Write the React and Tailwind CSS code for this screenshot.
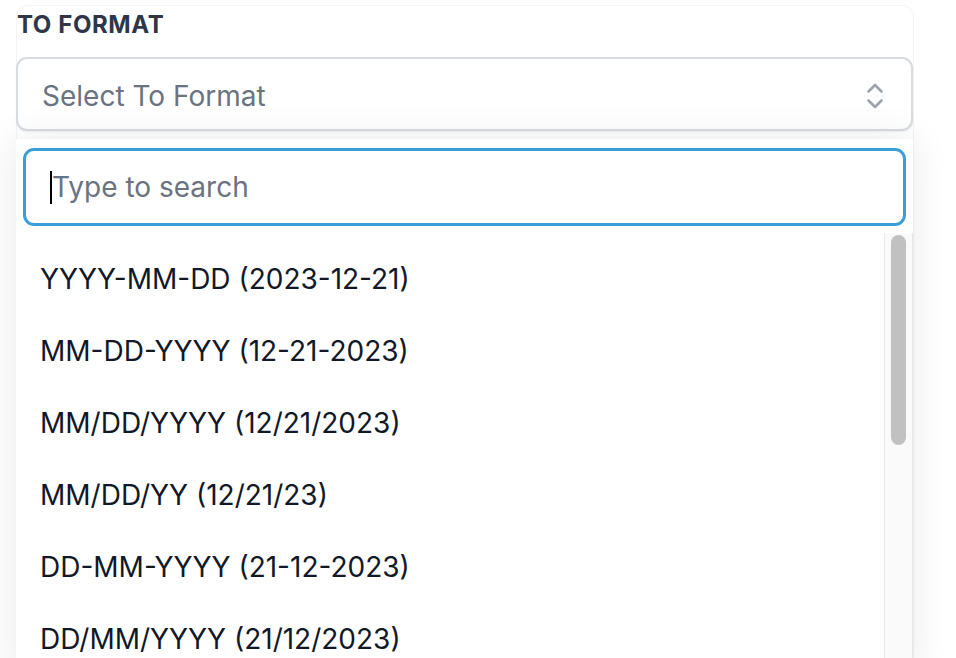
const FORMATS = [
  'YYYY-MM-DD (2023-12-21)',
  'MM-DD-YYYY (12-21-2023)',
  'MM/DD/YYYY (12/21/2023)',
  'MM/DD/YY (12/21/23)',
  'DD-MM-YYYY (21-12-2023)',
  'DD/MM/YYYY (21/12/2023)',
];

function UpDown() {
  return (
    <svg width="18" height="28" viewBox="0 0 18 28" fill="none" stroke="#9ca3af" strokeWidth="2.6" strokeLinecap="round" strokeLinejoin="round">
      <path d="M2.5 9.5 L9 3 L15.5 9.5" />
      <path d="M2.5 18.5 L9 25 L15.5 18.5" />
    </svg>
  );
}

export default function App() {
  return (
    <div
      className="h-[658px] w-[956px] overflow-hidden bg-white"
      style={{ fontFamily: 'Inter, "Noto Sans", sans-serif' }}
    >
      <div className="ml-4 mt-[5px] w-[898px] rounded-t-xl border border-b-0 border-[#f4f4f5]">
        <div className="pt-[4px]">
          <p className="text-[24px] font-bold leading-[30px] tracking-[0.6px] text-[#2d3748]">TO FORMAT</p>
          <div className="mt-[17px] flex h-[74px] w-[897px] -ml-px items-center justify-between rounded-[11px] border-2 border-[#d8dbe0] bg-white pl-[24px] pr-[27px] pt-[3px] shadow-[0_1px_2px_rgba(0,0,0,0.06)]">
            <span className="text-[28px] text-[#6b7280]">Select To Format</span>
            <UpDown />
          </div>
        </div>

        <div className="mt-[8px] -ml-px w-[897px] bg-white shadow-[0_0_36px_rgba(0,0,0,0.09)]">
          <div className="px-[7px] pt-[9px] pb-[7px]">
            <div className="flex h-[78px] items-center rounded-[11px] border-[3px] border-[#3a9fd8] pl-[24px]">
              <span className="h-[33px] w-[2px] bg-black" />
              <span className="text-[28px] text-[#6b7280]">Type to search</span>
            </div>
          </div>
          <div className="flex">
            <ul className="flex-1 pt-[10px]">
              {FORMATS.map((f) => (
                <li key={f} className="px-[24px] py-5 text-[28px] leading-[32px] text-[#111827]">
                  {f}
                </li>
              ))}
            </ul>
            <div className="w-[29px] border-x border-[#e8e8e8] bg-[#fafafa] px-[6px] pt-[2px]">
              <div className="h-[210px] rounded-full bg-[#c1c1c1]" />
            </div>
          </div>
        </div>
      </div>
    </div>
  );
}
